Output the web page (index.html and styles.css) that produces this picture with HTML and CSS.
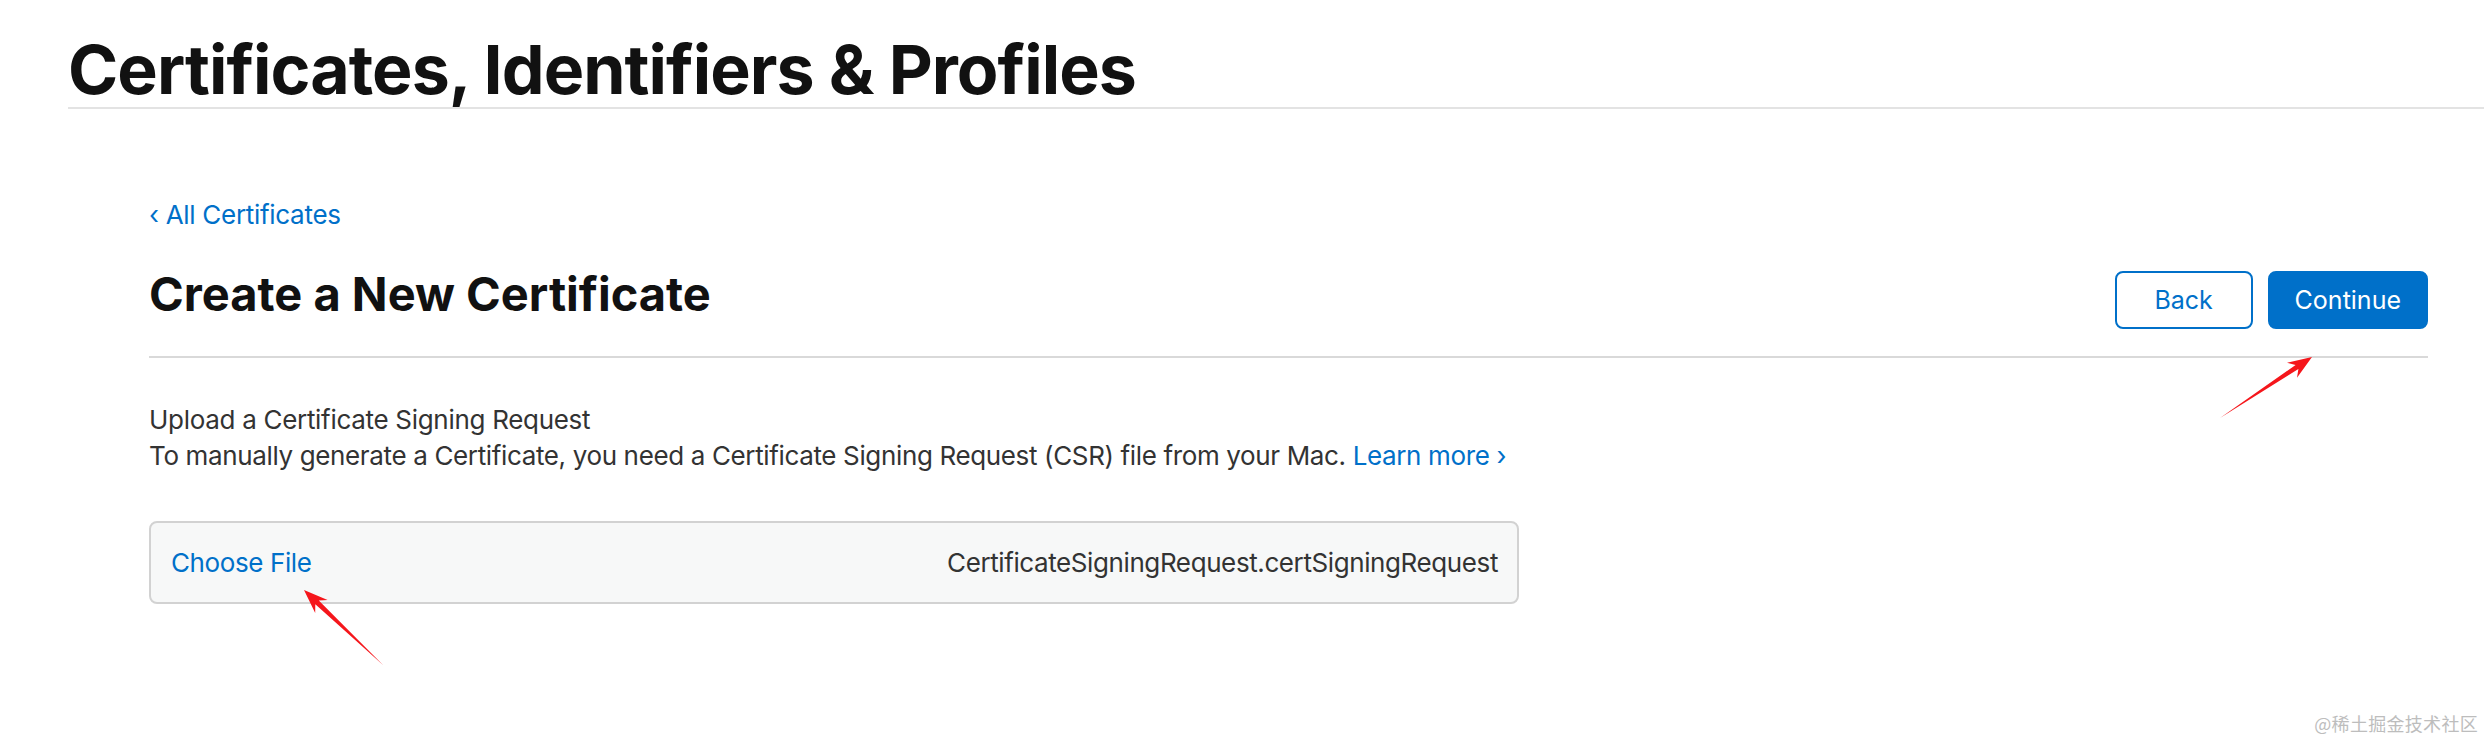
FILE: index.html
```html
<!DOCTYPE html>
<html lang="en">
<head>
<meta charset="utf-8">
<title>Certificates, Identifiers &amp; Profiles</title>
<link rel="stylesheet" href="styles.css">
</head>
<body>
<header class="top">
  <h1 class="title">Certificates, Identifiers &amp; Profiles</h1>
</header>
<main class="content">
  <a class="back" href="#">‹ All Certificates</a>
  <div class="head-row">
    <h2 class="heading">Create a New Certificate</h2>
    <div class="actions">
      <button class="btn ghost">Back</button>
      <button class="btn primary">Continue</button>
    </div>
  </div>
  <section class="upload">
    <h3 class="upload-title">Upload a Certificate Signing Request</h3>
    <p class="upload-text">To manually generate a Certificate, you need a Certificate Signing Request (CSR) file from your Mac. <a class="learn" href="#">Learn more ›</a></p>
    <div class="filebox">
      <span class="choose">Choose File</span>
      <span class="filename">CertificateSigningRequest.certSigningRequest</span>
    </div>
  </section>
</main>
<svg class="annotations" width="2484" height="742" viewBox="0 0 2484 742">
  <polygon points="2220,418 2298.4,369.1 2297,377.8 2312,357 2287,362.8 2295.6,364.9" fill="#f5161b"/>
  <polygon points="383,665 318.8,600.6 327.6,600 304,590 315.2,613 315.3,604.2" fill="#f5161b"/>
</svg>
<div class="watermark">@稀土掘金技术社区</div>
</body>
</html>
```

FILE: styles.css
```css
html, body {
  margin: 0;
  padding: 0;
  background: #ffffff;
}

body {
  font-family: "Inter", "Liberation Sans", sans-serif;
  color: #333333;
  width: 2484px;
  height: 742px;
  overflow: hidden;
  position: relative;
}

.top {
  margin-left: 68px;
  padding-top: 35px;
  padding-bottom: 4px;
  border-bottom: 2px solid #e3e3e3;
}

.title {
  margin: 0;
  font-size: 68px;
  line-height: 68px;
  font-weight: 700;
  color: #111111;
  letter-spacing: -0.95px;
}

.content {
  margin-left: 149px;
  margin-right: 56px;
  padding-top: 93px;
}

.back {
  display: block;
  font-size: 26px;
  line-height: 26px;
  color: #0070c9;
  text-decoration: none;
  letter-spacing: -0.3px;
  margin-bottom: 42px;
}

.head-row {
  display: flex;
  justify-content: space-between;
  align-items: flex-start;
  padding-bottom: 27px;
  border-bottom: 2px solid #d9d9d9;
}

.heading {
  margin: 0;
  font-size: 47px;
  line-height: 47px;
  font-weight: 700;
  color: #111111;
  letter-spacing: 0;
}

.actions {
  display: flex;
  gap: 15px;
  margin-top: 1px;
}

.btn {
  font-family: inherit;
  font-size: 25px;
  height: 58px;
  min-width: 138px;
  padding: 0 25px;
  border-radius: 8px;
  border: 2px solid #0070c9;
  cursor: pointer;
}

.btn.ghost {
  background: #ffffff;
  color: #0070c9;
}

.btn.primary {
  background: #0070c9;
  color: #ffffff;
}

.upload {
  padding-top: 44px;
}

.upload-title {
  margin: 0;
  font-size: 26px;
  line-height: 36px;
  font-weight: 400;
  letter-spacing: -0.3px;
  color: #333333;
}

.upload-text {
  margin: 0;
  font-size: 26px;
  line-height: 36px;
  letter-spacing: -0.36px;
  color: #333333;
}

.learn {
  color: #0070c9;
  text-decoration: none;
}

.filebox {
  margin-top: 47px;
  width: 1370px;
  height: 83px;
  box-sizing: border-box;
  border: 2px solid #d2d2d2;
  border-radius: 8px;
  background: #f7f8f8;
  display: flex;
  align-items: center;
  justify-content: space-between;
  padding: 0 19px 0 20px;
  font-size: 26px;
  line-height: 26px;
  letter-spacing: -0.4px;
}

.choose {
  color: #0070c9;
}

.filename {
  color: #333333;
}

.annotations {
  position: absolute;
  left: 0;
  top: 0;
  pointer-events: none;
}

.watermark {
  position: absolute;
  right: 6px;
  bottom: 10px;
  font-family: "Noto Sans CJK SC", sans-serif;
  font-size: 18px;
  line-height: 18px;
  letter-spacing: 0.3px;
  color: #bdbdbd;
}
```
